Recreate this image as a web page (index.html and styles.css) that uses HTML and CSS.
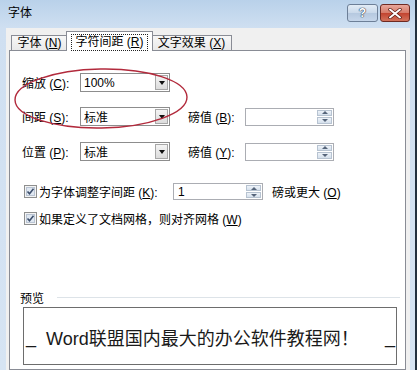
FILE: index.html
```html
<!DOCTYPE html>
<html lang="zh-CN">
<head>
  <meta charset="UTF-8" />
  <title>字体</title>
  <link rel="stylesheet" href="styles.css">
</head>
<body>

  <div class="window">
    <!-- Title bar -->
    <div class="titlebar">
      <span class="title">字体</span>
      <div class="caption">
        <button class="cap-btn help">?</button>
        <button class="cap-btn close">
          <svg width="14" height="11" viewBox="0 0 14 11">
            <path d="M2 1.5 L12 9.5 M12 1.5 L2 9.5" stroke="#5a1a12" stroke-width="3.4" stroke-linecap="round"/>
            <path d="M2 1.5 L12 9.5 M12 1.5 L2 9.5" stroke="#fff" stroke-width="2" stroke-linecap="round"/>
          </svg>
        </button>
      </div>
    </div>

    <div class="client">
      <!-- Tabs -->
      <div class="tabs">
        <div class="tab tab-font">字体 (<u>N</u>)</div>
        <div class="tab tab-spacing active"><span class="focus">字符间距 (<u>R</u>)</span></div>
        <div class="tab tab-effects">文字效果 (<u>X</u>)</div>
      </div>

      <div class="panel">
        <!-- Scale / spacing / position -->
        <div class="form">
          <div class="row">
            <label class="lbl">缩放 (<u>C</u>):</label>
            <div class="combo"><span>100%</span><i class="drop"></i></div>
          </div>
          <div class="row">
            <label class="lbl">间距 (<u>S</u>):</label>
            <div class="combo"><span>标准</span><i class="drop"></i></div>
            <label class="lbl-pt">磅值 (<u>B</u>):</label>
            <div class="spin"><span></span><i class="arrows"><b class="up"></b><b class="down"></b></i></div>
          </div>
          <div class="row">
            <label class="lbl">位置 (<u>P</u>):</label>
            <div class="combo"><span>标准</span><i class="drop"></i></div>
            <label class="lbl-pt">磅值 (<u>Y</u>):</label>
            <div class="spin"><span></span><i class="arrows"><b class="up"></b><b class="down"></b></i></div>
          </div>
        </div>

        <!-- Checkboxes -->
        <div class="checks">
          <div class="check-row">
            <svg class="checkbox" width="13" height="13" viewBox="0 0 13 13">
              <rect x="0.5" y="0.5" width="12" height="12" fill="#f4f4f4" stroke="#8e8f8f"/>
              <rect x="2.5" y="2.5" width="8" height="8" fill="#dfe7f1" stroke="#b9c4d3"/>
              <path d="M3.5 6.5 L5.5 8.8 L9.5 3.8" fill="none" stroke="#3d4f6c" stroke-width="1.6"/>
            </svg>
            <label class="check-lbl kern">为字体调整字间距 (<u>K</u>):</label>
            <div class="spin kern-spin"><span>1</span><i class="arrows"><b class="up"></b><b class="down"></b></i></div>
            <label class="after">磅或更大 (<u>O</u>)</label>
          </div>
          <div class="check-row">
            <svg class="checkbox" width="13" height="13" viewBox="0 0 13 13">
              <rect x="0.5" y="0.5" width="12" height="12" fill="#f4f4f4" stroke="#8e8f8f"/>
              <rect x="2.5" y="2.5" width="8" height="8" fill="#dfe7f1" stroke="#b9c4d3"/>
              <path d="M3.5 6.5 L5.5 8.8 L9.5 3.8" fill="none" stroke="#3d4f6c" stroke-width="1.6"/>
            </svg>
            <label class="check-lbl">如果定义了文档网格，则对齐网格 (<u>W</u>)</label>
          </div>
        </div>

        <!-- Preview -->
        <div class="group">
          <div class="group-title"><span>预览</span><i class="rule"></i></div>
          <div class="preview">
            <span class="us">_</span>
            <span class="sample">Word联盟国内最大的办公软件教程网！</span>
            <span class="us">_</span>
          </div>
        </div>
      </div>
    </div>

    <!-- red annotation ring -->
    <svg class="mark" width="417" height="370" viewBox="0 0 417 370">
      <ellipse cx="101" cy="98.5" rx="86" ry="29.5" fill="none" stroke="#b22a3c" stroke-width="1.4" transform="rotate(-1 101 98.5)"/>
    </svg>
  </div>

</body>
</html>
```

FILE: styles.css
```css
body {
  margin: 0;
  background: #22303f;
  font-family: 'Liberation Sans', 'Noto Sans CJK SC', sans-serif;
  font-size: 12px;
  color: #000;
  overflow: hidden;
}

u {
  text-decoration: underline;
  text-underline-offset: 1px;
}

.window {
  position: relative;
  width: 415px;
  height: 370px;
  background: linear-gradient(#b9d1ea, #cfdff1 28px, #d6e4f3);
}

/* Title bar */
.titlebar {
  height: 28px;
  display: flex;
  justify-content: space-between;
  align-items: flex-start;
  padding: 0 5px 0 8px;
}

.title {
  line-height: 27px;
  font-size: 12px;
}

.caption {
  display: flex;
  margin-top: 4px;
  gap: 2px;
}

.cap-btn {
  height: 18px;
  border: 1px solid #6d7f97;
  border-radius: 3px;
  padding: 0;
  display: flex;
  align-items: center;
  justify-content: center;
}

.help {
  width: 31px;
  background: linear-gradient(#e3ecf6, #c9d8ea 50%, #b5c8df 51%, #c6d6ea);
  color: #fff;
  font: bold 12px 'Liberation Sans', sans-serif;
  text-shadow: 0 0 1px #2d3e55, 0 0 1px #2d3e55, 0 0 1px #2d3e55;
}

.close {
  width: 30px;
  border-color: #6e2a22;
  background: linear-gradient(#e8a79b, #d67a68 50%, #c2432f 51%, #d3735c);
}

/* Client area */
.client {
  margin: 0 5px 0 6px;
  height: 342px;
  background: #f0f0f0;
}

.tabs {
  height: 22px;
  padding-left: 5px;
  display: flex;
  align-items: flex-end;
}

.tab {
  box-sizing: border-box;
  height: 15px;
  border: 1px solid #898c95;
  border-bottom: none;
  background: linear-gradient(#f7f7f7, #e9e9e9);
  line-height: 14px;
  text-align: center;
  white-space: nowrap;
}

.tab-font {
  width: 57px;
}

.tab-spacing {
  width: 87px;
  margin-left: -1px;
}

.tab-effects {
  width: 81px;
  margin-left: -1px;
}

.tab.active {
  position: relative;
  z-index: 1;
  height: 20px;
  margin-bottom: -1px;
  margin-left: -2px;
  margin-right: -1px;
  background: #fff;
  padding-top: 2px;
}

.focus {
  display: block;
  height: 15px;
  margin: 0 4px;
  border: 1px dotted #222;
  line-height: 14px;
}

.panel {
  box-sizing: border-box;
  margin: 0 4px 0 3px;
  height: 320px;
  border: 1px solid #898c95;
  background: #fff;
}

/* Scale / spacing rows */
.form {
  padding: 22px 0 0 12px;
}

.row {
  display: flex;
  align-items: center;
  height: 19px;
  margin-bottom: 16px;
}

.row:first-child {
  margin-bottom: 15px;
}

.lbl {
  width: 58px;
}

.combo {
  box-sizing: border-box;
  width: 90px;
  height: 19px;
  border: 1px solid #8d8d8d;
  display: flex;
  align-items: center;
  justify-content: space-between;
  padding-left: 3px;
  background: #fff;
}

.drop {
  box-sizing: border-box;
  width: 13px;
  height: 15px;
  margin-right: 1px;
  border: 1px solid #a7a7a7;
  background: linear-gradient(#f4f4f4, #dcdcdc);
  display: flex;
  align-items: center;
  justify-content: center;
}

.drop::after {
  content: '';
  border-left: 3.5px solid transparent;
  border-right: 3.5px solid transparent;
  border-top: 4px solid #111;
}

.lbl-pt {
  margin-left: 18px;
  width: 57px;
}

.spin {
  box-sizing: border-box;
  width: 89px;
  height: 18px;
  border: 1px solid #abadb3;
  display: flex;
  justify-content: space-between;
  align-items: stretch;
  padding-left: 4px;
  background: #fff;
  line-height: 16px;
}

.arrows {
  width: 15px;
  display: flex;
  flex-direction: column;
  margin: 1px;
  gap: 1px;
}

.arrows b {
  flex: 1;
  background: linear-gradient(#eef3f9, #d5e0ec);
  border: 1px solid #b7c3d1;
  display: flex;
  align-items: center;
  justify-content: center;
}

.up::after,
.down::after {
  content: '';
  border-left: 3px solid transparent;
  border-right: 3px solid transparent;
}

.up::after {
  border-bottom: 3px solid #56657a;
}

.down::after {
  border-top: 3px solid #56657a;
}

/* Checkbox rows */
.checks {
  margin-top: 22px;
  padding-left: 14px;
}

.check-row {
  display: flex;
  align-items: center;
  height: 17px;
  margin-bottom: 10px;
}

.checkbox {
  margin-right: 2px;
}

.kern {
  width: 134px;
}

.kern-spin {
  width: 90px;
  height: 17px;
}

.after {
  margin-left: 9px;
}

/* Preview group */
.group {
  margin-top: 64px;
  padding: 0 5px 0 10px;
}

.group-title {
  display: flex;
  align-items: center;
  height: 13px;
}

.rule {
  flex: 1;
  height: 1px;
  margin-left: 13px;
  background: #dde3e8;
}

.preview {
  box-sizing: border-box;
  margin: 3px 3px 0 3px;
  height: 58px;
  border: 1px solid #6d6d6d;
  display: flex;
  align-items: center;
  padding: 2px 1px 0 2px;
  font-size: 18px;
  color: #1a1a1a;
}

.us {
  width: 10px;
}

.sample {
  margin-left: 10px;
  flex: 1;
}

.mark {
  position: absolute;
  left: 0;
  top: 0;
  pointer-events: none;
}
```
